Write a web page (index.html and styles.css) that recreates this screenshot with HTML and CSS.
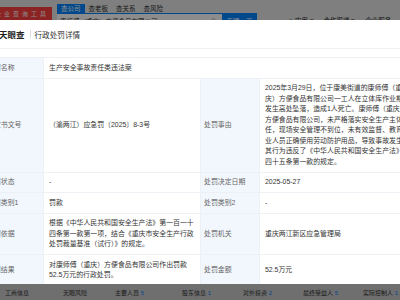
FILE: index.html
```html
<!DOCTYPE html>
<html lang="zh-CN">
<head>
  <meta charset="UTF-8">
  <meta name="viewport" content="width=device-width, initial-scale=1.0">
  <title>行政处罚详情</title>
  <link rel="stylesheet" href="styles.css">
</head>
<body>
  <div class="page">
    <header class="site-header">
      <div class="brand">企业查询工具</div>
      <div class="search">
        <div class="search-tabs">
          <span class="tab active">查公司</span>
          <span class="tab">查老板</span>
          <span class="tab">查关系</span>
          <span class="tab">查风险</span>
        </div>
        <div class="search-box">
          <span class="search-text">康师傅（重庆）方便食品有限公司</span>
          <span class="clear">⊗</span>
          <button class="search-btn">天眼一下</button>
        </div>
      </div>
      <nav class="site-nav">
        <span>■ 应用 ▾</span>
        <span>合作渠道 ▾</span>
        <span>企业服务</span>
      </nav>
    </header>
    <div class="company-tabs">
      <span>工商信息</span>
      <span>天眼风险</span>
      <span>主要人员 <em>5</em></span>
      <span>股东信息 <em>1</em></span>
      <span>对外投资 <em>2</em></span>
      <span>最终受益人 <em>5</em></span>
      <span>实际控制人 <em>1</em></span>
    </div>
  </div>

  <!-- 遮罩 + 弹窗 -->
  <div class="mask"></div>
  <div class="dialog">
    <div class="dialog-header">
      <span class="logo">天眼查</span>
      <span class="divider"></span>
      <span class="dialog-title">行政处罚详情</span>
    </div>
    <table class="detail-table">
      <colgroup>
        <col class="col-label">
        <col class="col-value">
        <col class="col-label2">
        <col class="col-value">
      </colgroup>
      <tr>
        <td class="label">处罚名称</td>
        <td class="value" colspan="3">生产安全事故责任类违法案</td>
      </tr>
      <tr>
        <td class="label">决定书文号</td>
        <td class="value">（渝两江）应急罚〔2025〕8-3号</td>
        <td class="label">处罚事由</td>
        <td class="value">2025年3月29日，位于康美街道的康师傅（重庆）方便食品有限公司一工人在立体库作业期间发生高处坠落，造成1人死亡。康师傅（重庆）方便食品有限公司，未严格落实安全生产主体责任，现场安全管理不到位，未有效监督、教育从业人员正确使用劳动防护用品，导致事故发生。其行为违反了《中华人民共和国安全生产法》第四十五条第一款的规定。</td>
      </tr>
      <tr>
        <td class="label">处罚状态</td>
        <td class="value">-</td>
        <td class="label">处罚决定日期</td>
        <td class="value">2025-05-27</td>
      </tr>
      <tr>
        <td class="label">处罚类别1</td>
        <td class="value">罚款</td>
        <td class="label">处罚类别2</td>
        <td class="value">-</td>
      </tr>
      <tr>
        <td class="label">处罚依据</td>
        <td class="value">根据《中华人民共和国安全生产法》第一百一十四条第一款第一项，结合《重庆市安全生产行政处罚裁量基准（试行）》的规定。</td>
        <td class="label">处罚机关</td>
        <td class="value">重庆两江新区应急管理局</td>
      </tr>
      <tr>
        <td class="label">处罚结果</td>
        <td class="value">对康师傅（重庆）方便食品有限公司作出罚款52.5万元的行政处罚。</td>
        <td class="label">处罚金额</td>
        <td class="value">52.5万元</td>
      </tr>
    </table>
  </div>
</body>
</html>
```

FILE: styles.css
```css
body {
  font-family: "Liberation Sans", "Noto Sans CJK SC", sans-serif;
  margin: 0;
  padding: 0;
  width: 400px;
  height: 300px;
  overflow: hidden;
  position: relative;
}
.page {
  height: 300px;
  display: flex;
  flex-direction: column;
  background-color: #e8e8e8;
}
.site-header {
  display: flex;
  align-items: flex-start;
  height: 40px;
}
.brand {
  margin: 7px 0 0 -8px;
  width: 60px;
  height: 20px;
  line-height: 14px;
  background-color: #ff4040;
  color: #fff;
  font-size: 6px;
  letter-spacing: 3px;
  text-align: center;
  white-space: nowrap;
}
.search {
  margin: 4px 0 0 5px;
  width: 200px;
}
.search-tabs {
  display: flex;
  height: 9px;
}
.tab {
  padding: 0 4px;
  font-size: 6.5px;
  line-height: 9px;
  color: #333;
}
.tab.active {
  background-color: #0084ff;
  color: #fff;
}
.search-box {
  display: flex;
  align-items: center;
  height: 14px;
  background-color: #fff;
  border-top: 1px solid #0084ff;
}
.search-text {
  flex: 1;
  padding-left: 3px;
  font-size: 6.5px;
  color: #333;
}
.clear {
  font-size: 7px;
  color: #999;
  margin-right: 5px;
}
.search-btn {
  width: 35px;
  height: 14px;
  padding: 0;
  border: none;
  background-color: #0084ff;
  color: #fff;
  font-family: inherit;
  font-size: 6.5px;
}
.site-nav {
  display: flex;
  gap: 10px;
  margin: 15px 0 0 32px;
  font-size: 6.5px;
  color: #222;
  white-space: nowrap;
}
.company-tabs {
  margin-top: auto;
  height: 16px;
  display: grid;
  grid-template-columns: 58px 52px 67px 61px 60px 60px auto;
  padding-left: 5px;
  align-items: center;
  background-color: #cacaca;
  font-size: 6px;
  color: #333;
  white-space: nowrap;
}
.company-tabs em {
  font-style: normal;
  color: #0084ff;
}
.mask {
  position: absolute;
  inset: 0;
  background-color: rgba(0, 0, 0, 0.45);
}
.dialog {
  position: absolute;
  top: 20px;
  left: -17px;
  width: 433px;
  height: 264px;
  overflow: hidden;
  background-color: #fff;
}
.dialog-header {
  display: flex;
  align-items: center;
  height: 28px;
  padding-left: 16px;
  border-bottom: 1px solid #f0f0f0;
}
.logo {
  font-size: 8.5px;
  font-weight: bold;
  color: #222;
}
.divider {
  width: 1px;
  height: 8px;
  margin: 0 4px 0 5px;
  background-color: #ddd;
}
.dialog-title {
  font-size: 7.6px;
  color: #333;
}
.detail-table {
  margin-top: 8px;
  width: 433px;
  table-layout: fixed;
  border-collapse: collapse;
  font-size: 6.9px;
  line-height: 10.5px;
}
.col-label { width: 60px; }
.col-label2 { width: 59px; }
.col-value { width: 157px; }
.detail-table td {
  border: 1px solid #edf0f4;
  padding: 4.5px 5px;
  vertical-align: middle;
}
.detail-table .label {
  padding-left: 3px;
  background-color: #f2f7fd;
  color: #666;
  white-space: nowrap;
}
.detail-table .value {
  color: #333;
}
```
